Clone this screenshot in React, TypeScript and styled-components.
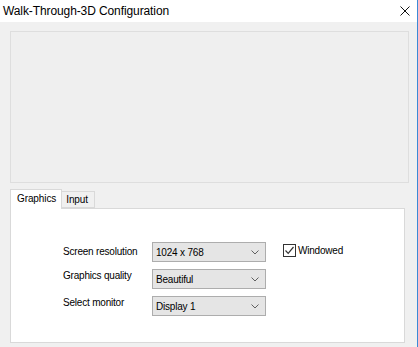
import React from 'react';
import styled, { createGlobalStyle } from 'styled-components';

const GlobalStyle = createGlobalStyle`
    html, body {
        margin: 0;
        padding: 0;
        background: #f0f0f0;
    }
    body {
        font-family: "Liberation Sans", Arial, sans-serif;
    }
`;

const Window = styled.div`
    width: 418px;
    height: 347px;
    box-sizing: border-box;
    border-right: 1px solid #3c8ad6;
    background: #f0f0f0;
    display: flex;
    flex-direction: column;
    overflow: hidden;
`;

const TitleBar = styled.div`
    height: 22px;
    background: #ffffff;
    display: flex;
    align-items: center;
    justify-content: space-between;
    padding: 0 7px 0 3px;
    flex-shrink: 0;
`;

const TitleText = styled.div`
    font-size: 12px;
    color: #000000;
    letter-spacing: -0.1px;
`;

const CloseIcon = styled.svg`
    width: 10px;
    height: 10px;
`;

const Body = styled.div`
    flex: 1;
    display: flex;
    flex-direction: column;
    padding: 9px 10px 0 10px;
`;

const Banner = styled.div`
    height: 152px;
    border: 1px solid #dedede;
    background: #efefef;
    box-sizing: border-box;
    margin-right: -2px;
`;

const TabStrip = styled.div`
    display: flex;
    align-items: flex-end;
    margin-top: 6px;
    height: 19px;
    position: relative;
    z-index: 1;
`;

const Tab = styled.div<{ $active?: boolean }>`
    box-sizing: border-box;
    height: ${p => (p.$active ? '20px' : '17px')};
    padding: ${p => (p.$active ? '3px 5px 0 6px' : '2px 6px 0 4px')};
    margin-bottom: ${p => (p.$active ? '-1px' : '0')};
    background: ${p => (p.$active ? '#ffffff' : '#f0f0f0')};
    border: 1px solid #d9d9d9;
    border-bottom: ${p => (p.$active ? 'none' : '1px solid #d9d9d9')};
    border-left: ${p => (p.$active ? '1px solid #d9d9d9' : 'none')};
    font-size: 10px;
    color: #000000;
    letter-spacing: -0.1px;
`;

const TabPanel = styled.div`
    height: 135px;
    box-sizing: border-box;
    background: #ffffff;
    border: 1px solid #d9d9d9;
    margin-right: 2px;
    padding: 33px 0 0 52px;
    display: flex;
    gap: 17px;
`;

const FormGrid = styled.div`
    display: grid;
    grid-template-columns: 89px 114px;
    grid-auto-rows: 20px;
    row-gap: 7px;
    align-items: start;
`;

const Label = styled.div<{ $top: number }>`
    font-size: 10px;
    line-height: 13px;
    color: #000000;
    letter-spacing: -0.2px;
    margin-top: ${p => p.$top}px;
`;

const Combo = styled.div`
    box-sizing: border-box;
    height: 20px;
    background: #e5e5e5;
    border: 1px solid #adadad;
    display: flex;
    align-items: center;
    justify-content: space-between;
    padding: 0 6px 0 3px;
    font-size: 10px;
    letter-spacing: -0.2px;
    color: #000000;
`;

const Chevron = styled.svg`
    width: 8px;
    height: 5px;
`;

const CheckRow = styled.div`
    display: flex;
    align-items: center;
    gap: 2px;
    align-self: flex-start;
    margin-top: 2px;
    font-size: 10px;
    letter-spacing: -0.2px;
    color: #000000;
`;

const CheckBox = styled.div`
    width: 13px;
    height: 13px;
    box-sizing: border-box;
    border: 1px solid #333333;
    background: #ffffff;
    display: flex;
    align-items: center;
    justify-content: center;
`;

const fields = [
    { label: 'Screen resolution', value: '1024 x 768', top: 3 },
    { label: 'Graphics quality', value: 'Beautiful', top: 0 },
    { label: 'Select monitor', value: 'Display 1', top: 0 },
];

function App() {
    return (
        <Window>
            <GlobalStyle />
            <TitleBar>
                <TitleText>Walk-Through-3D Configuration</TitleText>
                <CloseIcon viewBox="0 0 10 10">
                    <path d="M0.5 0.5 L9.5 9.5 M9.5 0.5 L0.5 9.5" stroke="#111" strokeWidth="1" fill="none" />
                </CloseIcon>
            </TitleBar>
            <Body>
                <Banner />
                <TabStrip>
                    <Tab $active>Graphics</Tab>
                    <Tab>Input</Tab>
                </TabStrip>
                <TabPanel>
                    <FormGrid>
                        {fields.map(f => (
                            <React.Fragment key={f.label}>
                                <Label $top={f.top}>{f.label}</Label>
                                <Combo>
                                    <span>{f.value}</span>
                                    <Chevron viewBox="0 0 8 5">
                                        <path d="M0.5 0.5 L4 4 L7.5 0.5" stroke="#606060" strokeWidth="1" fill="none" />
                                    </Chevron>
                                </Combo>
                            </React.Fragment>
                        ))}
                    </FormGrid>
                    <CheckRow>
                        <CheckBox>
                            <svg width="11" height="11" viewBox="0 0 11 11">
                                <path d="M1.5 5.5 L4.2 8.3 L9.5 2" stroke="#333" strokeWidth="1.2" fill="none" />
                            </svg>
                        </CheckBox>
                        Windowed
                    </CheckRow>
                </TabPanel>
            </Body>
        </Window>
    );
}

export default App;
